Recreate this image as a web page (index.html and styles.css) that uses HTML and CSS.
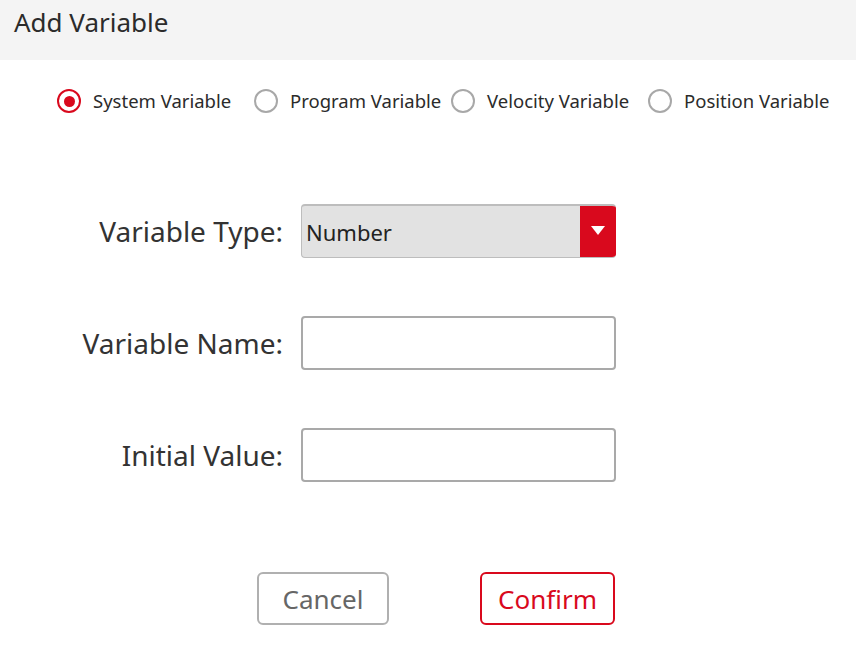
FILE: index.html
```html
<!DOCTYPE html>
<html>
<head>
<meta charset="utf-8">
<link rel="stylesheet" href="styles.css">
</head>
<body>
<div class="dialog">
  <div class="header"><span class="title">Add Variable</span></div>
  <div class="radios">
    <label class="radio checked"><span class="dot"></span><span class="rlabel">System Variable</span></label>
    <label class="radio"><span class="dot"></span><span class="rlabel">Program Variable</span></label>
    <label class="radio"><span class="dot"></span><span class="rlabel">Velocity Variable</span></label>
    <label class="radio"><span class="dot"></span><span class="rlabel">Position Variable</span></label>
  </div>
  <div class="form">
    <div class="flabel">Variable Type:</div>
    <div class="select">
      <span class="select-text">Number</span>
      <span class="select-btn"><svg width="14" height="10" viewBox="0 0 14 10"><path d="M0 0 L14 0 L7 9 Z" fill="#fff"/></svg></span>
    </div>
    <div class="flabel">Variable Name:</div>
    <div class="input"></div>
    <div class="flabel">Initial Value:</div>
    <div class="input"></div>
  </div>
  <div class="buttons">
    <div class="btn cancel">Cancel</div>
    <div class="btn confirm">Confirm</div>
  </div>
</div>
</body>
</html>
```
FILE: styles.css
```css
html, body {
  margin: 0;
  padding: 0;
  background: #fff;
}
body {
  font-family: "Noto Sans", "Open Sans", sans-serif;
  color: #2b2b2b;
  width: 856px;
  height: 655px;
  overflow: hidden;
}
.header {
  height: 60px;
  background: #f4f4f4;
  box-sizing: border-box;
  padding: 4px 0 0 14px;
}
.title {
  font-size: 26px;
  line-height: 36px;
  color: #2b2b2b;
}
.radios {
  display: flex;
  align-items: center;
  padding: 29px 0 0 57px;
  height: 24px;
  white-space: nowrap;
}
.radio {
  display: flex;
  align-items: center;
  flex-shrink: 0;
  margin-right: 11px;
}
.dot {
  width: 24px;
  height: 24px;
  flex-shrink: 0;
  box-sizing: border-box;
  border: 2px solid #a8a8a8;
  border-radius: 50%;
  display: flex;
  align-items: center;
  justify-content: center;
}
.radio.checked .dot {
  border-color: #d9091d;
}
.radio.checked .dot::after {
  content: "";
  width: 11px;
  height: 11px;
  border-radius: 50%;
  background: #d9091d;
}
.rlabel {
  margin-left: 12px;
  width: 150px;
  font-size: 18.5px;
  line-height: 24px;
  color: #2b2b2b;
}
.form {
  display: grid;
  grid-template-columns: 283px 315px;
  column-gap: 18px;
  row-gap: 58px;
  margin-top: 91px;
  align-items: center;
}
.flabel {
  text-align: right;
  font-size: 28px;
  color: #333;
}
.select {
  height: 54px;
  box-sizing: border-box;
  background: #e2e2e2;
  border: 1px solid #bdbdbd;
  border-top-width: 2px;
  border-right: none;
  border-radius: 4px;
  display: flex;
  align-items: center;
  overflow: hidden;
}
.select-text {
  flex: 1;
  padding-left: 4px;
  font-size: 22px;
  color: #222;
}
.select-btn {
  width: 36px;
  align-self: stretch;
  margin: -2px 0 -1px 0;
  background: #d9091d;
  display: flex;
  align-items: center;
  justify-content: center;
}
.input {
  height: 54px;
  box-sizing: border-box;
  border: 2px solid #a9a9a9;
  border-radius: 4px;
  background: #fff;
}
.buttons {
  display: flex;
  padding-left: 257px;
  gap: 91px;
  margin-top: 90px;
}
.btn {
  height: 53px;
  box-sizing: border-box;
  border-radius: 6px;
  display: flex;
  align-items: center;
  justify-content: center;
  font-size: 26px;
}
.cancel {
  width: 132px;
  border: 2px solid #b0b0b0;
  color: #666;
}
.confirm {
  width: 135px;
  border: 2px solid #d9091d;
  color: #d9091d;
}
```
